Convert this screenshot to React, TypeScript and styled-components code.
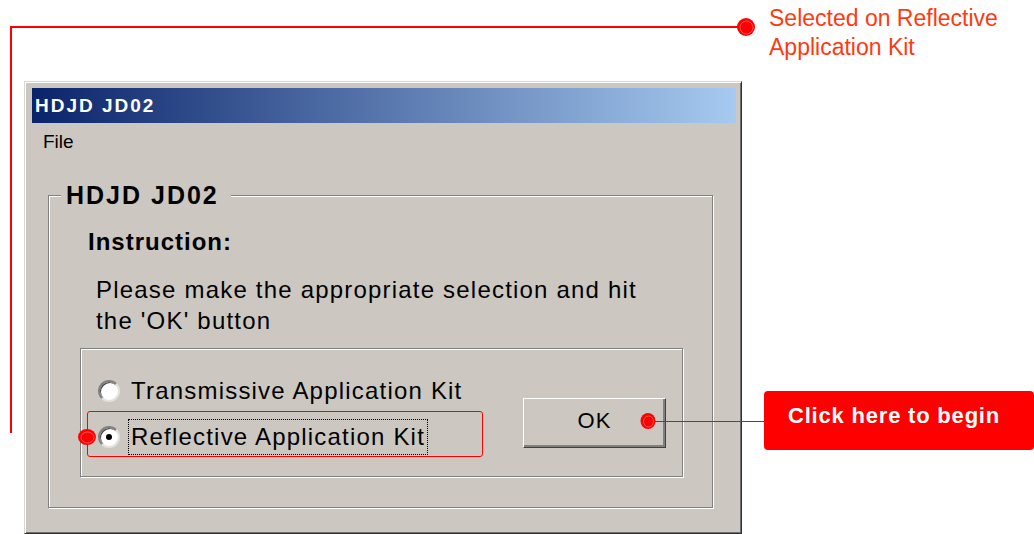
import styled, { createGlobalStyle } from 'styled-components';

const GlobalStyle = createGlobalStyle`
  html, body {
    margin: 0;
    padding: 0;
    background: #fff;
  }
  body {
    font-family: "Liberation Sans", Arial, sans-serif;
  }
`;

const Page = styled.div`
  position: relative;
  width: 1034px;
  height: 534px;
  overflow: hidden;
  background: #fff;
`;

const Header = styled.div`
  height: 81px;
  box-sizing: border-box;
  padding: 4px 0 0 769px;
`;

const NoteText = styled.div`
  color: #ff3a10;
  font-size: 23px;
  line-height: 29px;
`;

const Body = styled.div`
  display: flex;
  align-items: flex-start;
`;

const Window = styled.div`
  margin-left: 24px;
  width: 718px;
  box-sizing: border-box;
  display: flex;
  flex-direction: column;
  background: #ccc8c1;
  border: 1px solid;
  border-color: #dcd8d0 #303030 #303030 #dcd8d0;
  box-shadow: inset 1px 1px 0 #fff, inset -1px -1px 0 #707070;
  padding: 6px 5px 25px 7px;
`;

const TitleBar = styled.div`
  height: 35px;
  display: flex;
  align-items: center;
  padding-left: 3px;
  background: linear-gradient(to right, #0a246a, #a6caf0);
  color: #fff;
  font-size: 19px;
  font-weight: 700;
  letter-spacing: 2px;
`;

const MenuBar = styled.div`
  height: 38px;
  display: flex;
  align-items: center;
  padding-left: 11px;
  color: #000;
  font-size: 19px;
`;

const GroupBox = styled.div`
  display: flex;
  flex-direction: column;
  margin: 34px 23px 0 16px;
  padding: 0 29px 30px 31px;
  border: 1px solid #808080;
  box-shadow: inset 1px 1px 0 #fff, 1px 1px 0 #fff;
`;

const GroupCaption = styled.div`
  align-self: flex-start;
  margin: -16px 0 0 -19px;
  padding: 0 12px 0 5px;
  background: #ccc8c1;
  color: #000;
  font-size: 25px;
  font-weight: 700;
  line-height: 30px;
  letter-spacing: 2px;
`;

const Heading = styled.div`
  margin: 18px 0 0 8px;
  color: #000;
  font-size: 24px;
  font-weight: 700;
  line-height: 28px;
  letter-spacing: 1px;
`;

const Instruction = styled.div`
  margin: 18px 0 0 16px;
  color: #000;
  font-size: 24px;
  line-height: 31px;
  letter-spacing: 1.2px;
`;

const OptionsFrame = styled.div`
  display: flex;
  align-items: flex-start;
  margin-top: 12px;
  padding: 20px 16px 19px 6px;
  border: 1px solid #808080;
  box-shadow: inset 1px 1px 0 #fff, 1px 1px 0 #fff;
`;

const OptionList = styled.div`
  display: flex;
  flex-direction: column;
`;

const OptionRow = styled.div<{ $marked?: boolean }>`
  display: flex;
  align-items: center;
  width: 396px;
  height: ${(p) => (p.$marked ? '46px' : '44px')};
  box-sizing: border-box;
  margin-top: ${(p) => (p.$marked ? '-2px' : '0')};
  padding: ${(p) => (p.$marked ? '6px 0 0 10px' : '0 0 0 10px')};
  border: 1.5px solid ${(p) => (p.$marked ? '#ff0000' : 'transparent')};
  border-radius: 3px;
`;

const Radio = styled.span<{ $checked?: boolean }>`
  display: flex;
  align-items: center;
  justify-content: center;
  flex: none;
  width: 22px;
  height: 22px;
  box-sizing: border-box;
  border-radius: 50%;
  background: #fff;
  border: 2px solid;
  border-color: #808080 #e4e2de #e4e2de #808080;
  box-shadow: inset 1px 1px 0 #404040;

  &::after {
    content: '';
    width: 6px;
    height: 6px;
    border-radius: 50%;
    background: ${(p) => (p.$checked ? '#000' : 'transparent')};
  }
`;

const OptionLabel = styled.span<{ $focused?: boolean }>`
  margin-left: 8px;
  padding: 0 2px;
  border: 1px dotted ${(p) => (p.$focused ? '#000' : 'transparent')};
  color: #000;
  font-size: 24px;
  line-height: 34px;
  letter-spacing: 1.2px;
  white-space: nowrap;
`;

const OkButton = styled.button`
  margin: 29px 0 0 auto;
  width: 143px;
  height: 50px;
  box-sizing: border-box;
  background: #ccc8c1;
  border: 1px solid;
  border-color: #fff #404040 #404040 #fff;
  box-shadow: inset -2px -2px 0 #808080;
  color: #000;
  font-family: "Liberation Sans", Arial, sans-serif;
  font-size: 22px;
  letter-spacing: 1px;
  padding: 0 0 4px 0;
`;

const Callout = styled.div`
  display: flex;
  align-items: center;
  margin: 310px 0 0 22px;
  width: 270px;
  height: 59px;
  box-sizing: border-box;
  padding: 0 0 10px 24px;
  border-radius: 4px;
  background: #ff0000;
  color: #fff;
  font-size: 22px;
  font-weight: 700;
  letter-spacing: 0.8px;
  white-space: nowrap;
`;

const Leaders = styled.svg`
  position: absolute;
  left: 0;
  top: 0;
  pointer-events: none;
`;

// solid red marker with a faint inner ring
const Dot = ({ x, y, rx, ry }: { x: number; y: number; rx: number; ry: number }) => (
  <g>
    <ellipse cx={x} cy={y} rx={rx} ry={ry} fill="#ff0000" />
    <ellipse cx={x + 0.5} cy={y + 0.5} rx={rx - 2.5} ry={ry - 2.5} fill="none" stroke="#ffb4b4" strokeWidth="0.8" opacity="0.55" />
  </g>
);

export default function App() {
  return (
    <Page>
      <GlobalStyle />
      <Header>
        <NoteText>Selected on Reflective</NoteText>
        <NoteText>Application Kit</NoteText>
      </Header>
      <Body>
        <Window>
          <TitleBar>HDJD JD02</TitleBar>
          <MenuBar>File</MenuBar>
          <GroupBox>
            <GroupCaption>HDJD JD02</GroupCaption>
            <Heading>Instruction:</Heading>
            <Instruction>
              Please make the appropriate selection and hit
              <br />
              the 'OK' button
            </Instruction>
            <OptionsFrame>
              <OptionList>
                <OptionRow>
                  <Radio />
                  <OptionLabel>Transmissive Application Kit</OptionLabel>
                </OptionRow>
                <OptionRow $marked>
                  <Radio $checked />
                  <OptionLabel $focused>Reflective Application Kit</OptionLabel>
                </OptionRow>
              </OptionList>
              <OkButton>OK</OkButton>
            </OptionsFrame>
          </GroupBox>
        </Window>
        <Callout>Click here to begin</Callout>
      </Body>
      <Leaders width="1034" height="534" viewBox="0 0 1034 534">
        <polyline points="11,433 11,27 738,27" fill="none" stroke="#ff0000" strokeWidth="2" />
        <Dot x={746} y={27} rx={9} ry={9} />
        <Dot x={87} y={437} rx={9} ry={8} />
        <line x1="655" y1="421.5" x2="764" y2="421.5" stroke="#ff0000" strokeWidth="1" />
        <Dot x={648} y={421} rx={7.5} ry={8} />
      </Leaders>
    </Page>
  );
}
